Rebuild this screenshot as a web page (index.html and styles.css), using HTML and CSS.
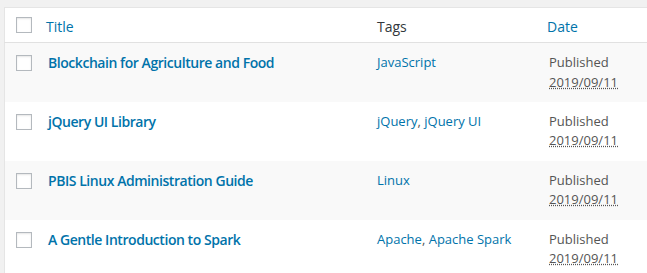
FILE: index.html
```html
<!DOCTYPE html>
<html lang="en">
<head>
 <meta charset="UTF-8">
 <meta name="viewport" content="width=device-width, initial-scale=1">
 <title>Posts</title>
 <link rel="stylesheet" href="styles.css">
</head>
<body>
 <div class="wrap">
  <table class="posts-table">
   <thead>
    <tr>
     <th class="check-col"><span class="checkbox"></span></th>
     <th class="title-col"><a href="#" class="sort-link">Title</a></th>
     <th class="tags-col">Tags</th>
     <th class="date-col"><a href="#" class="sort-link">Date</a></th>
    </tr>
   </thead>
   <tbody>
    <tr class="alt">
     <td class="check-col"><span class="checkbox"></span></td>
     <td class="title-col"><a href="#" class="row-title">Blockchain for Agriculture and Food</a></td>
     <td class="tags-col"><a href="#">JavaScript</a></td>
     <td class="date-col">Published<br><span class="post-date">2019/09/11</span></td>
    </tr>
    <tr>
     <td class="check-col"><span class="checkbox"></span></td>
     <td class="title-col"><a href="#" class="row-title">jQuery UI Library</a></td>
     <td class="tags-col"><a href="#">jQuery</a>, <a href="#">jQuery UI</a></td>
     <td class="date-col">Published<br><span class="post-date">2019/09/11</span></td>
    </tr>
    <tr class="alt">
     <td class="check-col"><span class="checkbox"></span></td>
     <td class="title-col"><a href="#" class="row-title">PBIS Linux Administration Guide</a></td>
     <td class="tags-col"><a href="#">Linux</a></td>
     <td class="date-col">Published<br><span class="post-date">2019/09/11</span></td>
    </tr>
    <tr>
     <td class="check-col"><span class="checkbox"></span></td>
     <td class="title-col"><a href="#" class="row-title">A Gentle Introduction to Spark</a></td>
     <td class="tags-col"><a href="#">Apache</a>, <a href="#">Apache Spark</a></td>
     <td class="date-col">Published<br><span class="post-date">2019/09/11</span></td>
    </tr>
   </tbody>
  </table>
 </div>
</body>
</html>
```

FILE: styles.css
```css
:root {
 --page-bg: #f1f1f1;
 --border-color: #e5e5e5;
 --link-color: #0073aa;
 --heading-color: #32373c;
 --text-color: #555555;
 --alt-row: #f9f9f9;
}

html,
body {
 margin: 0;
 padding: 0;
 overflow: hidden;
}

body {
 background-color: var(--page-bg);
 font-family: "Open Sans", "Noto Sans", sans-serif;
 font-size: 13px;
 color: var(--text-color);
}

.wrap {
 padding: 7px 0 0 4px;
}

.posts-table {
 width: 760px;
 table-layout: fixed;
 border-collapse: collapse;
 border: 1px solid var(--border-color);
 background-color: #ffffff;
}

.posts-table a {
 color: var(--link-color);
 text-decoration: none;
}

.posts-table thead tr {
 height: 35px;
}

.posts-table th {
 padding: 2px 10px 0;
 text-align: left;
 font-weight: 400;
 font-size: 14px;
 color: var(--heading-color);
 border-bottom: 1px solid #e1e1e1;
 vertical-align: middle;
}

.posts-table td {
 padding: 10px 10px 6px;
 vertical-align: top;
 line-height: 19.5px;
}

.posts-table tbody tr {
 height: 59px;
}

.posts-table tr.alt {
 background-color: var(--alt-row);
}

/* checkbox column */
.posts-table .check-col {
 width: 22px;
 padding: 0 0 0 11px;
}

.posts-table td.check-col {
 padding-top: 12px;
}

.checkbox {
 display: block;
 width: 14px;
 height: 14px;
 border: 1px solid #b4b9be;
 background-color: #ffffff;
 box-shadow: inset 0 1px 2px rgba(0, 0, 0, 0.1);
}

.title-col {
 width: 309px;
}

.sort-link {
 margin-left: -2px;
}

.tags-col {
 width: 152px;
}

.row-title {
 font-size: 14px;
 font-weight: 600;
 letter-spacing: -0.45px;
}

.post-date {
 text-decoration: underline dotted;
}
```
